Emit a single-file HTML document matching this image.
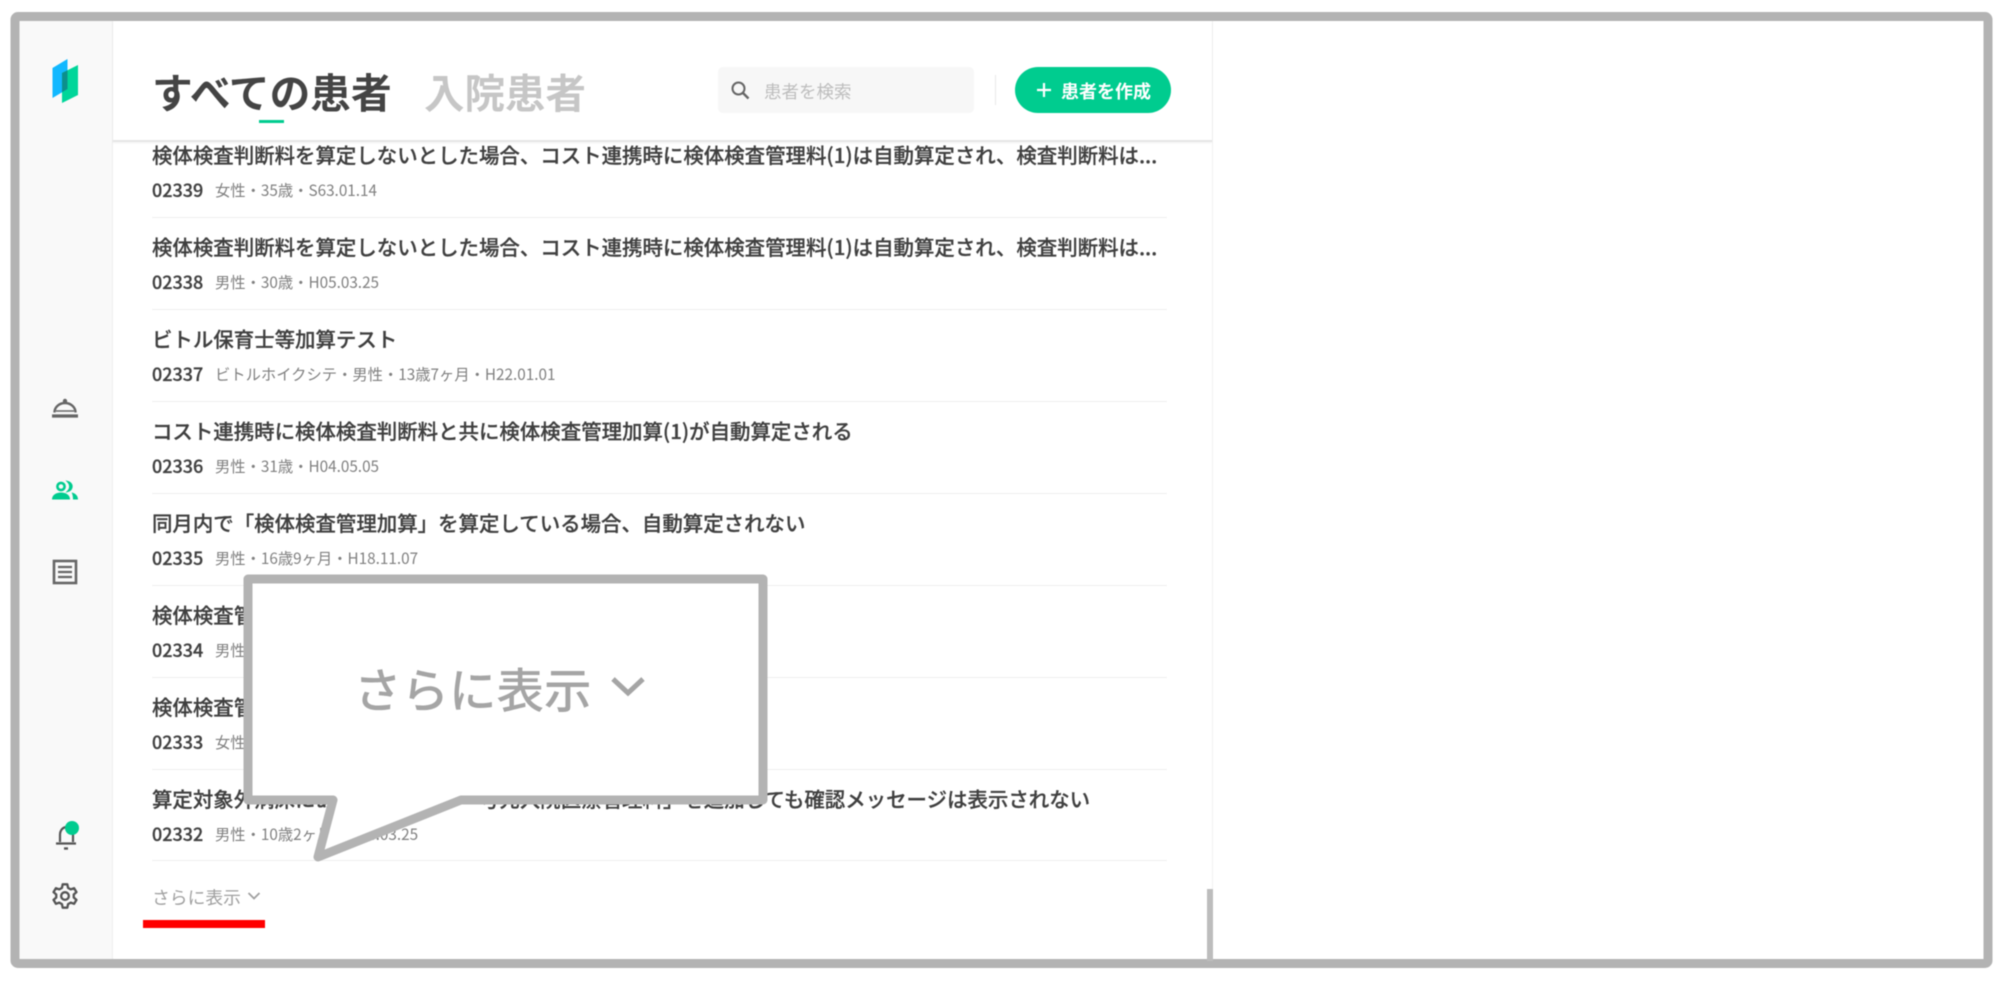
<!DOCTYPE html>
<html lang="ja">
<head>
<meta charset="utf-8">
<title>すべての患者</title>
<style>
html,body{margin:0;padding:0;background:#fff;}
body{width:2000px;height:981px;overflow:hidden;position:relative;font-family:"Noto Sans CJK JP","Liberation Sans",sans-serif;}
#root{position:absolute;left:0;top:0;width:2000px;height:981px;filter:blur(.6px);}
.a{position:absolute;white-space:nowrap;}
.t{position:absolute;left:152px;font-size:20.45px;line-height:29px;color:#3f3f3f;font-weight:500;-webkit-text-stroke:.25px #3f3f3f;white-space:nowrap;}
.n{position:absolute;left:152px;font-size:18px;line-height:24px;color:#3f3f3f;font-weight:500;-webkit-text-stroke:.25px #3f3f3f;}
.m{position:absolute;left:215px;font-size:15.3px;line-height:24px;color:#808080;white-space:nowrap;}
.d{position:absolute;left:152px;width:1015px;height:1px;background:#efefef;}
</style>
</head>
<body>
<div id="root">
  <div class="a" style="left:19px;top:21px;width:93px;height:940px;background:#f9f9f9;border-right:1px solid #eee;"></div>
  <div class="a" style="left:1212px;top:21px;width:1px;height:868px;background:#f2f2f2;"></div>

  <div class="t" style="top:140px;">検体検査判断料を算定しないとした場合、コスト連携時に検体検査管理料(1)は自動算定され、検査判断料は...</div>
  <div class="n" style="top:178px;">02339</div><div class="m" style="top:178px;">女性・35歳・S63.01.14</div>
  <div class="d" style="top:217px;"></div>

  <div class="t" style="top:232px;">検体検査判断料を算定しないとした場合、コスト連携時に検体検査管理料(1)は自動算定され、検査判断料は...</div>
  <div class="n" style="top:270px;">02338</div><div class="m" style="top:270px;">男性・30歳・H05.03.25</div>
  <div class="d" style="top:309px;"></div>

  <div class="t" style="top:324px;">ビトル保育士等加算テスト</div>
  <div class="n" style="top:362px;">02337</div><div class="m" style="top:362px;">ビトルホイクシテ・男性・13歳7ヶ月・H22.01.01</div>
  <div class="d" style="top:401px;"></div>

  <div class="t" style="top:416px;">コスト連携時に検体検査判断料と共に検体検査管理加算(1)が自動算定される</div>
  <div class="n" style="top:454px;">02336</div><div class="m" style="top:454px;">男性・31歳・H04.05.05</div>
  <div class="d" style="top:493px;"></div>

  <div class="t" style="top:508px;">同月内で「検体検査管理加算」を算定している場合、自動算定されない</div>
  <div class="n" style="top:546px;">02335</div><div class="m" style="top:546px;">男性・16歳9ヶ月・H18.11.07</div>
  <div class="d" style="top:585px;"></div>

  <div class="t" style="top:600px;">検体検査管理加算</div>
  <div class="n" style="top:638px;">02334</div><div class="m" style="top:638px;">男性・40歳・H01.01.01</div>
  <div class="d" style="top:677px;"></div>

  <div class="t" style="top:692px;">検体検査管理加算</div>
  <div class="n" style="top:730px;">02333</div><div class="m" style="top:730px;">女性・40歳・H01.01.01</div>
  <div class="d" style="top:769px;"></div>

  <div class="t" style="top:784px;">算定対象外病床にある患者に対し「号先入院医療管理料」を追加しても確認メッセージは表示されない</div>
  <div class="n" style="top:822px;">02332</div><div class="m" style="top:822px;">男性・10歳2ヶ月・H24.03.25</div>
  <div class="d" style="top:860px;"></div>

  <div class="a" style="left:152px;top:884px;font-size:17.8px;line-height:26px;color:#a0a0a0;">さらに表示</div>
  <svg class="a" style="left:246px;top:888px;" width="16" height="16" viewBox="0 0 16 16"><path d="M2.5 5l5.5 5.5L13.5 5" fill="none" stroke="#a0a0a0" stroke-width="1.8"/></svg>
  <div class="a" style="left:143px;top:920px;width:122px;height:8px;background:#f00;"></div>

  <!-- header -->
  <div class="a" style="left:113px;top:21px;width:1099px;height:119px;background:#fff;border-bottom:2px solid #e6e6e6;box-shadow:0 1px 2px rgba(0,0,0,.06);"></div>
  <div class="a" style="left:152px;top:62px;font-size:40.7px;line-height:58px;font-weight:700;color:#444;">すべての患者</div>
  <div class="a" style="left:424px;top:62px;font-size:40.5px;line-height:58px;font-weight:700;color:#c6c6c6;">入院患者</div>
  <div class="a" style="left:259px;top:120px;width:25px;height:3px;background:#00cc8f;"></div>

  <div class="a" style="left:718px;top:67px;width:256px;height:46px;background:#f7f7f7;border-radius:5px;"></div>
  <svg class="a" style="left:729px;top:79px;" width="22" height="22" viewBox="0 0 22 22"><circle cx="9.5" cy="9.5" r="6" fill="none" stroke="#666" stroke-width="2"/><path d="M14 14l5.5 5.5" stroke="#666" stroke-width="2.4" fill="none"/></svg>
  <div class="a" style="left:764px;top:79px;font-size:17.5px;line-height:26px;color:#bdbdbd;">患者を検索</div>
  <div class="a" style="left:995px;top:75px;width:1px;height:30px;background:#e8e8e8;"></div>
  <div class="a" style="left:1015px;top:67px;width:156px;height:46px;background:#00cc8f;border-radius:23px;"></div>
  <svg class="a" style="left:1036px;top:82px;" width="16" height="16" viewBox="0 0 16 16"><path d="M8 1v14M1 8h14" stroke="#fff" stroke-width="2.2" fill="none"/></svg>
  <div class="a" style="left:1061px;top:78px;font-size:18px;line-height:26px;color:#fff;font-weight:700;">患者を作成</div>

  <!-- logo -->
  <svg class="a" style="left:48px;top:56px;" width="34" height="48" viewBox="0 0 34 48">
    <path d="M4.5 12L19.5 3v30L4.5 42z" fill="#12b8ff"/>
    <path d="M14 17L30 9v30l-16 8z" fill="#00d69a"/>
    <path d="M14 17L19.5 14.3v18.700l-5.500 3.300z" fill="#0c8f8c"/>
  </svg>

  <!-- service bell -->
  <svg class="a" style="left:50px;top:396px;" width="30" height="24" viewBox="0 0 30 24">
    <path d="M4.500 16.500a10.500 9.500 0 0 1 21 0" fill="none" stroke="#666" stroke-width="2.400"/>
    <path d="M6 15h18" stroke="#666" stroke-width="1.500"/>
    <circle cx="15" cy="5" r="2.200" fill="#666"/>
    <path d="M2 20h26" stroke="#666" stroke-width="3.200"/>
  </svg>
  <!-- people -->
  <svg class="a" style="left:50px;top:480px;" width="30" height="22" viewBox="0 0 30 22" fill="#00cc8f">
    <circle cx="11" cy="6.500" r="3.600" fill="none" stroke="#00cc8f" stroke-width="2.600"/>
    <path d="M18.500 2.200a4.500 4.500 0 0 1 0 8.600 6.500 6.500 0 0 0 0-8.600z" stroke="#00cc8f" stroke-width="2"/>
    <path d="M2 19.500c0-4.500 4-7 9-7s9 2.500 9 7z"/>
    <path d="M21.500 12.500c3.500.6 6.500 3 6.500 7h-5c0-2.500-.4-5.400-1.500-7z"/>
  </svg>
  <!-- list -->
  <svg class="a" style="left:52px;top:559px;" width="26" height="26" viewBox="0 0 26 26" fill="none" stroke="#666">
    <rect x="2" y="2" width="22" height="22" stroke-width="2.600"/>
    <path d="M6 8h14M6 13h14M6 18h14" stroke-width="2.200"/>
  </svg>
  <!-- bell -->
  <svg class="a" style="left:53px;top:822px;" width="26" height="30" viewBox="0 0 26 30" fill="none" stroke="#555" stroke-width="2.200">
    <path d="M7 20V13c0-5 3-8 7-8s6 3 6 8v7"/>
    <path d="M3 21.500h20"/>
    <path d="M11 26.500h4" stroke-width="2.400"/>
  </svg>
  <div class="a" style="left:65px;top:821px;width:14px;height:14px;border-radius:50%;background:#00cc8f;"></div>
  <!-- gear -->
  <svg class="a" style="left:51px;top:882px;" width="28" height="28" viewBox="0 0 24 24" fill="none" stroke="#555" stroke-width="2" stroke-linejoin="round">
    <circle cx="12" cy="12" r="3.300"/>
    <path d="M10 2h4l.6 3 2.300 1.300 2.900-1 2 3.400-2.300 2 0 2.600 2.300 2-2 3.400-2.900-1-2.300 1.300-.6 3h-4l-.6-3-2.300-1.300-2.900 1-2-3.400 2.300-2 0-2.600-2.300-2 2-3.400 2.900 1L9.400 5z"/>
  </svg>

  <!-- callout -->
  <svg class="a" style="left:0;top:0;" width="2000" height="981" viewBox="0 0 2000 981">
    <path d="M248 579H763V800H461L318 857 333 800H248Z" fill="#fff" stroke="#b3b3b3" stroke-width="9" stroke-linejoin="round"/>
    <rect x="15" y="16.500" width="1973" height="947" rx="3" fill="none" stroke="#b3b3b3" stroke-width="9"/>
    <rect x="1207" y="889" width="6" height="72" fill="#bdbdbd"/>
  </svg>
  <div class="a" style="left:354px;top:654px;font-size:47.5px;line-height:68px;font-weight:500;color:#a5a5a5;">さらに表示</div>
  <svg class="a" style="left:607px;top:670px;" width="42" height="32" viewBox="0 0 42 32"><path d="M6 9l15 14L36 9" fill="none" stroke="#a5a5a5" stroke-width="5"/></svg>
</div>
</body>
</html>
